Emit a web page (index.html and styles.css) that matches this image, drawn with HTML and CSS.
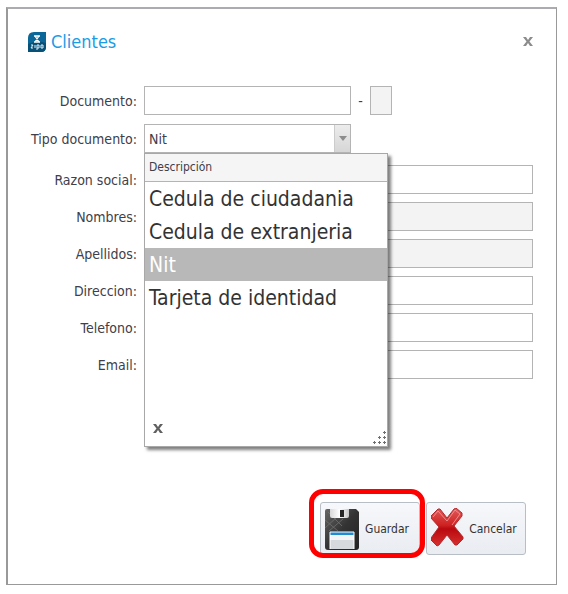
FILE: index.html
```html
<!DOCTYPE html>
<html lang="es">
<head>
    <meta charset="UTF-8">
    <meta name="viewport" content="width=device-width, initial-scale=1.0">
    <title>Clientes</title>
    <link rel="stylesheet" href="styles.css">
</head>
<body>
    <div class="dialog" role="dialog" aria-labelledby="dialog-title">
        <div class="dialog-header">
            <svg class="logo" viewBox="0 0 18 20" aria-hidden="true">
                <path d="M6 0H18V15Q18 20 13 20H0V6Q0 0 6 0Z" fill="#0b6798"/>
                <path d="M0 12Q9 8 18 11V15Q18 20 13 20H0Z" fill="#075078"/>
                <path d="M6 4H12M6 10H12M7 4L11 10M11 4L7 10" stroke="#fff" stroke-width="1.3" fill="none"/>
                <path d="M3 13H5L3 16H5M7 13V16M9 18V13H11V16H9M13 13H15V16H13Z" stroke="#e4f1f8" stroke-width="1" fill="none"/>
            </svg>
            <h1 class="title" id="dialog-title">Clientes</h1>
            <button type="button" class="close-button" aria-label="Cerrar">
                <svg viewBox="0 0 10 9" aria-hidden="true"><path d="M0 0H3L5 3L7 0H10L6.5 4.5L10 9H7L5 6L3 9H0L3.5 4.5Z"/></svg>
            </button>
        </div>

        <form class="form">
            <div class="field">
                <label for="documento">Documento:</label>
                <div class="document">
                    <input type="text" id="documento" class="short">
                    <span class="dash">-</span>
                    <input type="text" class="digit" aria-label="Digito de verificacion" disabled>
                </div>
            </div>
            <div class="field">
                <label for="tipo">Tipo documento:</label>
                <div class="combo">
                    <select id="tipo">
                        <option>Cedula de ciudadania</option>
                        <option>Cedula de extranjeria</option>
                        <option selected>Nit</option>
                        <option>Tarjeta de identidad</option>
                    </select>
                    <span class="combo-arrow"></span>
                    <div class="popup">
                        <table class="options">
                            <thead>
                                <tr><th>Descripción</th></tr>
                            </thead>
                            <tbody>
                                <tr><td>Cedula de ciudadania</td></tr>
                                <tr><td>Cedula de extranjeria</td></tr>
                                <tr class="selected"><td>Nit</td></tr>
                                <tr><td>Tarjeta de identidad</td></tr>
                            </tbody>
                        </table>
                        <div class="popup-footer">
                            <button type="button" class="close-button dark" aria-label="Cerrar lista">
                                <svg viewBox="0 0 10 9" aria-hidden="true"><path d="M0 0H3L5 3L7 0H10L6.5 4.5L10 9H7L5 6L3 9H0L3.5 4.5Z"/></svg>
                            </button>
                            <svg class="grip" viewBox="0 0 13 15" aria-hidden="true">
                                <path d="M10 2.500h3M11.500 1v3M5 7.500h3M6.500 6v3M10 7.500h3M11.500 6v3M0 12.500h3M1.500 11v3M5 12.500h3M6.500 11v3M10 12.500h3M11.500 11v3"/>
                            </svg>
                        </div>
                    </div>
                </div>
            </div>

            <div class="field-group">
                <div class="field">
                    <label for="razon">Razon social:</label>
                    <input type="text" id="razon">
                </div>
                <div class="field">
                    <label for="nombres">Nombres:</label>
                    <input type="text" id="nombres" disabled>
                </div>
                <div class="field">
                    <label for="apellidos">Apellidos:</label>
                    <input type="text" id="apellidos" disabled>
                </div>
                <div class="field">
                    <label for="direccion">Direccion:</label>
                    <input type="text" id="direccion">
                </div>
                <div class="field">
                    <label for="telefono">Telefono:</label>
                    <input type="text" id="telefono">
                </div>
                <div class="field">
                    <label for="email">Email:</label>
                    <input type="text" id="email">
                </div>
            </div>

            <div class="actions">
                <div class="highlighted">
                    <button type="submit" class="action">
                        <svg viewBox="0 0 34 42" aria-hidden="true">
                            <defs>
                                <linearGradient id="body" x1="0" y1="0" x2="1" y2="1">
                                    <stop offset="0" stop-color="#666"/>
                                    <stop offset="0.5" stop-color="#333"/>
                                    <stop offset="1" stop-color="#222"/>
                                </linearGradient>
                                <linearGradient id="metal" x1="0" y1="0" x2="1" y2="0">
                                    <stop offset="0" stop-color="#d8d8d8"/>
                                    <stop offset="0.5" stop-color="#fff"/>
                                    <stop offset="1" stop-color="#c4c4c4"/>
                                </linearGradient>
                            </defs>
                            <path d="M2 1H31L34 4V39Q34 42 31 42H3Q0 42 0 39V3Q0 1 2 1Z" fill="url(#body)"/>
                            <path d="M0 12L13 23M0 20L12 9M3 4L17 18M4 23L18 11" stroke="#777" stroke-width="0.7" fill="none"/>
                            <path d="M5 1H24V8Q24 10 22 10H7Q5 10 5 8Z" fill="url(#metal)"/>
                            <path d="M15 2H19V9H15Z" fill="#252525"/>
                            <path d="M5 24H29V41H5Z" fill="#f3f4f6"/>
                            <path d="M5 24H29V27H5Z" fill="#218bd0"/>
                            <path d="M5 32H29V41H5Z" fill="#d7dadd"/>
                            <path d="M5 41V24H29V41" stroke="#fff" stroke-width="1" fill="none"/>
                        </svg>
                        <span>Guardar</span>
                    </button>
                </div>
                <button type="button" class="action">
                    <svg viewBox="0 0 34 42" aria-hidden="true">
                        <defs>
                            <linearGradient id="red" x1="0" y1="0" x2="0" y2="1">
                                <stop offset="0" stop-color="#e05a5a"/>
                                <stop offset="0.45" stop-color="#cf2222"/>
                                <stop offset="0.55" stop-color="#b80a0f"/>
                                <stop offset="1" stop-color="#d83030"/>
                            </linearGradient>
                        </defs>
                        <path d="M0 8L7 1L9 1L16 10L23 1L25 0L31 5L31 8L23 18L32 29L32 31L26 37L24 37L16 27L8 37L6 38L0 32L0 30L8 19L0 10Z" fill="url(#red)" stroke="#b32a2e" stroke-width="1" stroke-linejoin="round"/>
                        <path d="M2 9L7 3L16 13L24 2L29 6L21 17" stroke="#f3a0a0" stroke-width="1" fill="none" opacity="0.8"/>
                    </svg>
                    <span>Cancelar</span>
                </button>
            </div>
        </form>
    </div>
</body>
</html>
```

FILE: styles.css
```css
* {
    box-sizing: border-box;
}

body {
    margin: 7px 11px 8px 6px;
    background-color: #fff;
    font-family: "DejaVu Sans Condensed", "Open Sans", sans-serif;
    font-size: 14px;
    color: #40404a;
}

.dialog {
    padding: 20px 23px 29px 20px;
    border: 1px solid #999;
    border-top: 2px solid #acacb0;
    border-left: 2px solid #999;
}

.dialog-header {
    display: flex;
    align-items: center;
    height: 25px;
    margin-bottom: 32px;
}

.logo {
    width: 18px;
    height: 20px;
    margin-right: 5px;
}

.title {
    margin: 0;
    font-size: 18px;
    font-weight: normal;
    color: #1a9ce6;
}

.close-button {
    display: flex;
    padding: 0;
    border: none;
    background: none;
    cursor: pointer;
}

.close-button svg {
    width: 10px;
    height: 9px;
    fill: #8c8c8c;
}

.dialog-header .close-button {
    margin-left: auto;
}

.close-button.dark svg {
    fill: #606060;
}

.form {
    display: flex;
    flex-direction: column;
    gap: 9px;
}

.field-group {
    display: flex;
    flex-direction: column;
    gap: 8px;
    margin-top: 3px;
}

.field {
    display: grid;
    grid-template-columns: 109px 1fr;
    column-gap: 7px;
    align-items: center;
}

.field label {
    text-align: right;
    white-space: nowrap;
}

input,
select {
    width: 100%;
    height: 29px;
    margin: 0;
    padding: 0 4px;
    border: 1px solid #b4b4b4;
    border-radius: 0;
    background-color: #fff;
    font: inherit;
    color: inherit;
}

input:disabled {
    background-color: #f3f3f3;
}

.document {
    display: flex;
    align-items: center;
}

.document .short {
    width: 207px;
}

.document .digit {
    width: 22px;
}

.dash {
    width: 19px;
    text-align: center;
}

.combo {
    position: relative;
    width: 207px;
}

.combo select {
    display: block;
    appearance: none;
}

.combo-arrow {
    position: absolute;
    top: 1px;
    right: 1px;
    bottom: 1px;
    display: flex;
    align-items: center;
    justify-content: center;
    width: 16px;
    border-left: 1px solid #ccc;
    background: linear-gradient(#ececec, #d6d6d6);
    pointer-events: none;
}

.combo-arrow::after {
    content: "";
    border: 4px solid transparent;
    border-top: 5px solid #8c8c8c;
    border-bottom: none;
}

/* Opened list */
.popup {
    position: absolute;
    top: 100%;
    left: 0;
    z-index: 1;
    display: flex;
    flex-direction: column;
    justify-content: space-between;
    width: 244px;
    height: 294px;
    border: 1px solid #a8a8a8;
    background-color: #fff;
    box-shadow: 3px 3px 3px rgba(0, 0, 0, 0.5);
}

.options {
    width: 100%;
    border-collapse: collapse;
}

.options th {
    height: 27px;
    padding: 0 4px;
    border-bottom: 1px solid #b4b4b4;
    background-color: #f5f5f5;
    font-size: 12px;
    font-weight: normal;
    text-align: left;
}

.options td {
    height: 33px;
    padding: 1px 4px 0;
    font-size: 21px;
    line-height: 32px;
    color: #333;
}

.options .selected td {
    background-color: #b8b8b8;
    color: #fff;
}

.popup-footer {
    display: flex;
    align-items: flex-start;
    justify-content: space-between;
    padding: 0 1px 1px 8px;
}

.grip {
    width: 13px;
    height: 15px;
    margin-top: 6px;
    fill: none;
    stroke: #707070;
    stroke-width: 1;
}

/* Buttons */
.actions {
    display: flex;
    align-items: flex-start;
    justify-content: flex-end;
    margin-top: 114px;
    padding-right: 7px;
}

.action {
    display: flex;
    align-items: center;
    width: 100px;
    height: 53px;
    padding: 0 4px;
    border: 1px solid #b8bec6;
    border-radius: 3px;
    background: linear-gradient(#f6f8fb, #e9ecf1);
    font: inherit;
    font-size: 12px;
    color: #333;
    cursor: pointer;
}

.action span {
    flex: 1;
    text-align: center;
}

.action > svg {
    width: 34px;
    height: 42px;
    flex-shrink: 0;
}

.highlighted {
    position: relative;
    margin-right: 6px;
}

.highlighted::after {
    content: "";
    position: absolute;
    top: -13px;
    right: -5px;
    bottom: -3px;
    left: -11px;
    border: 5px solid #f00;
    border-radius: 14px;
    pointer-events: none;
}
```
